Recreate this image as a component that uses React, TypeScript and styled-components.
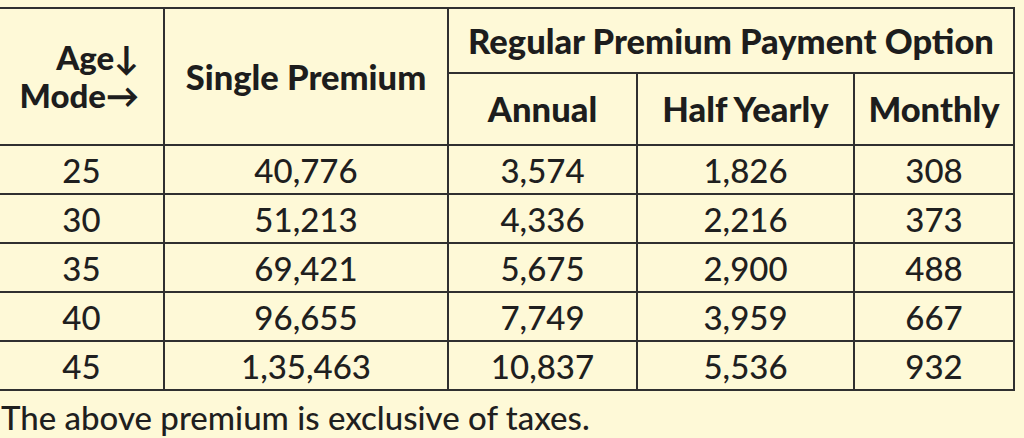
import React from "react";
import styled, { createGlobalStyle } from "styled-components";

const Global = createGlobalStyle`
  html, body { margin: 0; padding: 0; background: #fef9d7; }
  body { font-family: Lato, "Open Sans", sans-serif; color: #1f1f1f; }
`;

const Page = styled.div`
  width: 1024px;
  height: 438px;
  background: #fef9d7;
  padding-top: 7px;
  box-sizing: border-box;
  overflow: hidden;
`;

const Table = styled.table`
  border-collapse: collapse;
  width: 1014px;
  table-layout: fixed;
  border-top: 2px solid #303030;
  border-right: 2px solid #303030;
  border-bottom: 2px solid #303030;
`;

const Th = styled.th<{ $h?: number }>`
  border: 2px solid #303030;
  border-left-width: 0;
  font-weight: 900;
  font-size: 34.5px;
  line-height: 1.1;
  height: ${(p) => p.$h ?? 48}px;
  padding: 0;
  text-align: center;
  vertical-align: middle;
  color: #1d1d1d;
  white-space: nowrap;
  &:not(:first-child) { border-left: 2px solid #303030; }
`;

const ModeCell = styled(Th)`
  text-align: right;
  padding-right: 24px;
  line-height: 1.15;
  font-size: 33px;
`;

const Td = styled.td`
  border: 2px solid #303030;
  border-left-width: 0;
  font-size: 33px;
  font-weight: 500;
  height: 47px;
  padding: 0;
  text-align: center;
  vertical-align: middle;
  color: #1f1f1f;
  &:not(:first-child) { border-left: 2px solid #303030; }
`;

const Note = styled.p`
  margin: 6px 0 0 1px;
  font-size: 33px;
  font-weight: 500;
  color: #1f1f1f;
`;

const rows = [
  ["25", "40,776", "3,574", "1,826", "308"],
  ["30", "51,213", "4,336", "2,216", "373"],
  ["35", "69,421", "5,675", "2,900", "488"],
  ["40", "96,655", "7,749", "3,959", "667"],
  ["45", "1,35,463", "10,837", "5,536", "932"],
];

const widths = [164, 284, 189, 217, 160];

export default function App() {
  return (
    <Page>
      <Global />
      <Table>
        <colgroup>
          {widths.map((w, i) => (
            <col key={i} style={{ width: w }} />
          ))}
        </colgroup>
        <thead>
          <tr>
            <ModeCell rowSpan={2}>
              Age↓
              <br />
              Mode→
            </ModeCell>
            <Th rowSpan={2}>Single Premium</Th>
            <Th colSpan={3} $h={63}>
              Regular Premium Payment Option
            </Th>
          </tr>
          <tr>
            <Th $h={70}>Annual</Th>
            <Th $h={70}>Half Yearly</Th>
            <Th $h={70}>Monthly</Th>
          </tr>
        </thead>
        <tbody>
          {rows.map((r) => (
            <tr key={r[0]}>
              {r.map((c, i) => (
                <Td key={i}>{c}</Td>
              ))}
            </tr>
          ))}
        </tbody>
      </Table>
      <Note>The above premium is exclusive of taxes.</Note>
    </Page>
  );
}
